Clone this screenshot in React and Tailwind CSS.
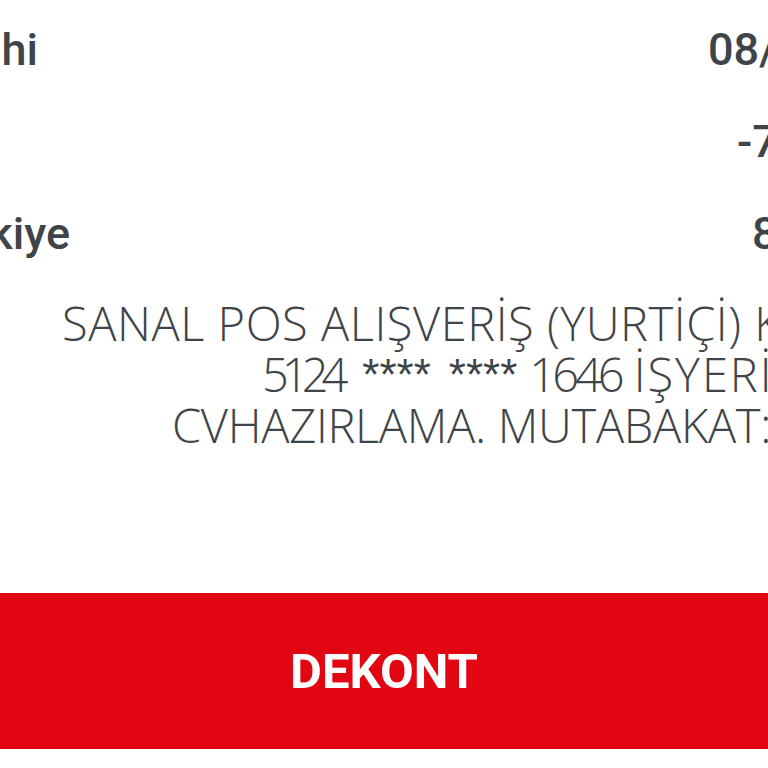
export default function App() {
  const rowText = "text-[45px] leading-[92px] font-medium text-[#3e4447] whitespace-nowrap";
  const line = "whitespace-nowrap text-[47px] leading-[51px] text-[#3e4447]";
  const star = { fontFamily: "'Liberation Sans', sans-serif" };
  return (
    <div className="w-[768px] h-[768px] overflow-hidden bg-white" style={{ fontFamily: "Roboto, 'Liberation Sans', sans-serif" }}>
      <div className="pt-[4px]">
        <div className="flex justify-between h-[92px]">
          <div className="w-[38px] shrink-0 flex justify-end">
            <span className={rowText + " shrink-0"}>İşlem Tarihi</span>
          </div>
          <div className="w-[60px] shrink-0">
            <span className={rowText}>08/11/2023</span>
          </div>
        </div>
        <div className="flex justify-between h-[92px]">
          <div className="w-0 shrink-0 flex justify-end">
            <span className={rowText + " shrink-0"}>Tutar</span>
          </div>
          <div className="w-[31px] shrink-0">
            <span className={rowText}>-75,00 TL</span>
          </div>
        </div>
        <div className="flex justify-between h-[92px]">
          <div className="w-[70px] shrink-0 flex justify-end">
            <span className={rowText + " shrink-0"}>Türkiye</span>
          </div>
          <div className="w-[16px] shrink-0">
            <span className={rowText}>8.120,45 TL</span>
          </div>
        </div>
      </div>
      <div className="mt-[18px] font-[350]" style={{ fontFamily: "'Open Sans', sans-serif" }}>
        <div className={line + " pl-[62px] tracking-[0.55px]"}>SANAL POS ALIŞVERİŞ (YURTİÇİ) KART NO:</div>
        <div className={line + " flex pl-[262px]"}>
          <span className="shrink-0 tracking-[-7px]">5124</span>
          <span className="shrink-0 ml-[21px] text-[44px] tracking-[0px]" style={star}>****</span>
          <span className="shrink-0 ml-[18px] text-[44px] tracking-[0px]" style={star}>****</span>
          <span className="shrink-0 ml-[12px] tracking-[-4px]">1646</span>
          <span className="shrink-0 ml-[13px] tracking-[2px]">İŞYERİ</span>
          <span className="shrink-0 ml-[24px]">ADI: CV</span>
        </div>
        <div className={line + " pl-[172px] tracking-[-0.3px]"}>CVHAZIRLAMA. MUTABAKAT: 1234</div>
      </div>
      <div className="mt-[142px] h-[156px] bg-[#e20613] flex items-center justify-center">
        <span className="text-white text-[49px] leading-[49px] font-bold">DEKONT</span>
      </div>
    </div>
  );
}
